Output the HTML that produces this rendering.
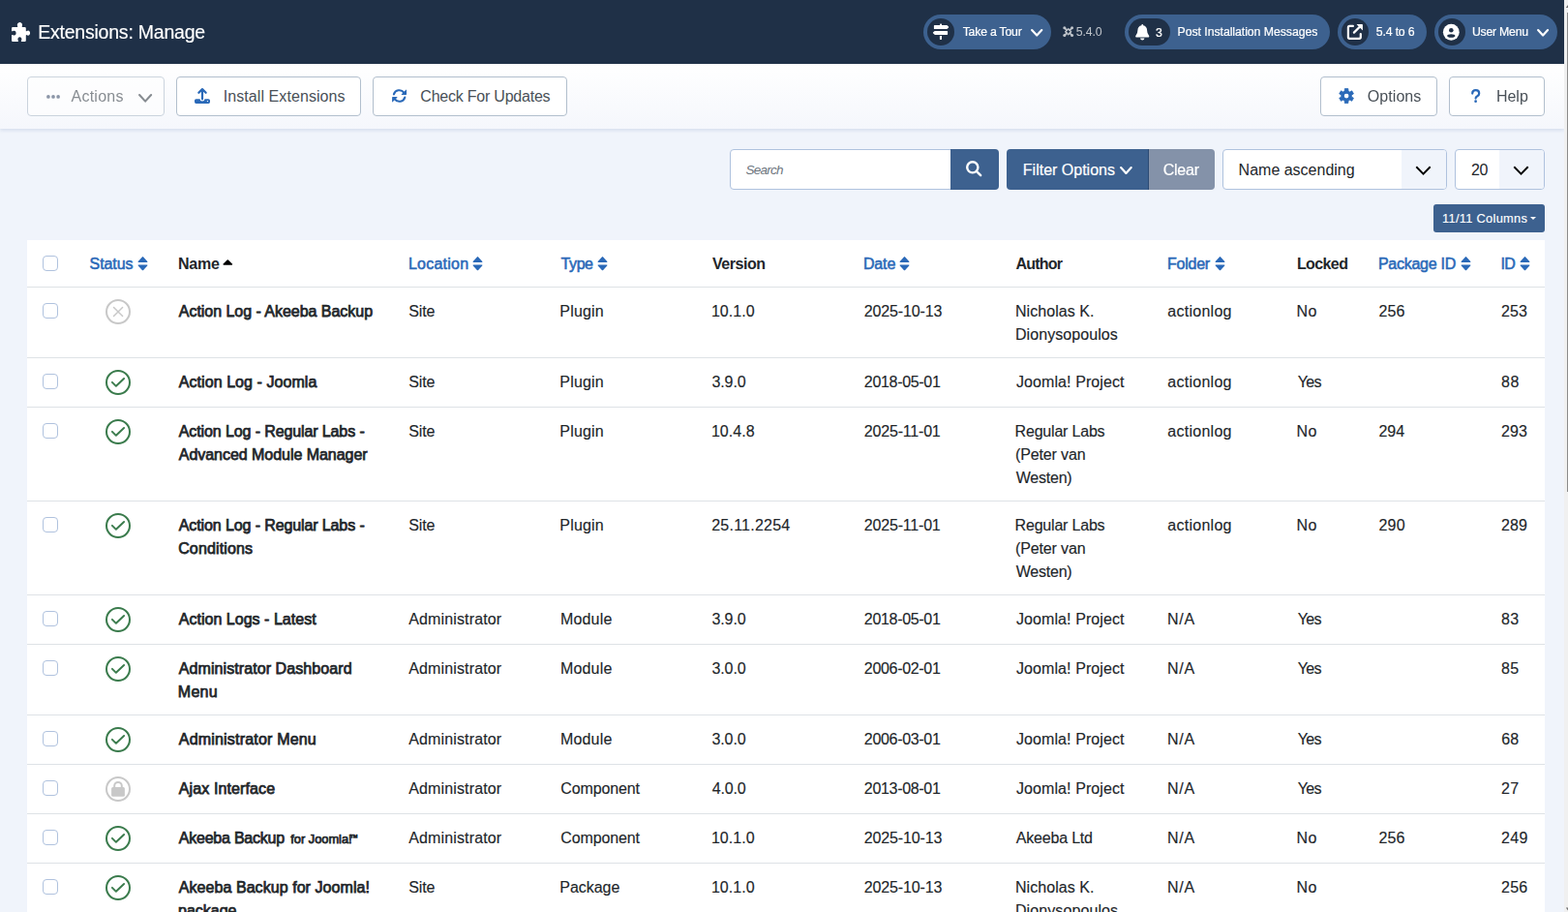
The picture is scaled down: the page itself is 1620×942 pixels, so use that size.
<!DOCTYPE html>
<html lang="en"><head><meta charset="utf-8"><title>Extensions: Manage</title>
<style>
*{box-sizing:border-box;margin:0;padding:0}
html,body{width:1620px;height:942px;overflow:hidden}
body{background:#f0f4fb;font-family:"Liberation Sans",sans-serif;font-size:16px;line-height:24px;color:#22262a;position:relative}
.ic{display:block;flex:none;overflow:visible}
span{white-space:nowrap}
#wrap{position:absolute;left:0;top:0;width:1616px;height:942px;overflow:hidden;background:#f0f4fb}
#sb{position:absolute;left:1616px;top:0;width:4px;height:942px;background:#f0f0f0}
#sb i{position:absolute;left:3px;top:13px;width:1px;height:495px;background:#8b8b8b}
#hd{position:absolute;left:0;top:0;width:1616px;height:66px;background:#1f3047;color:#fff;will-change:transform}
#ttl{font-weight:normal;position:absolute;left:40px;top:18.2px;font-size:19.5px;line-height:30px;color:#fff;-webkit-text-stroke:.15px currentColor}
.pill{position:absolute;top:15px;height:36px;border-radius:18px;background:#3d618f;color:#fff;font-size:12.3px;line-height:36px}
.pill .dot{position:absolute;left:4px;top:4px;height:28px;width:28px;border-radius:14px;background:#1f3047}
.pill .tx{position:absolute;top:-.5px;-webkit-text-stroke:.2px currentColor}
.ver{position:absolute;top:14.5px;height:36px;line-height:36px;font-size:12.3px;color:#fff;opacity:.71}
#tb{position:absolute;left:0;top:66px;width:1616px;height:67px;background:linear-gradient(#ffffff,#f5f7fc);box-shadow:0 2px 3px rgba(150,170,205,.26)}
.btn{position:absolute;top:13px;height:41px;border:1px solid #b2bfcd;border-radius:4px;background:#fff;color:#495057;font-size:16px;line-height:39px}
.btn .tx{position:absolute;top:0}
.btn.dis{opacity:.65;will-change:transform}
.ctl{position:absolute;top:154px;height:42px;font-size:16px;line-height:40px}
.ctl .tx{position:absolute;top:1px}
.inp{background:#fff;border:1px solid #afc2de;border-radius:4px}
.pri{background:#3d618f;color:#fff;line-height:42px;-webkit-text-stroke:.2px currentColor}
.sel{background:#fff;border:1px solid #afc2de;border-radius:4px;overflow:hidden}
.sel .arr{position:absolute;top:0;bottom:0;right:0;background:#f0f4fb}
#cols{position:absolute;left:1481px;top:211px;width:115px;height:29px;border-radius:3px;background:#3d618f;color:#fff;font-size:12.8px;line-height:29px}
#cols .tx{position:absolute;left:9.4px;top:-.5px;-webkit-text-stroke:.15px currentColor}
table{position:absolute;left:28px;top:248px;width:1568px;border-collapse:separate;border-spacing:0;table-layout:fixed;background:#fff}
td{-webkit-text-stroke:.15px currentColor}
th,td{padding:13px 12px 11px;vertical-align:top;text-align:left;font-weight:normal;border-bottom:1px solid #dee2e6;line-height:24px;white-space:nowrap;position:relative}
td.c{padding:12px}
thead th,thead td{color:#22262a;font-weight:bold}
thead a{font-weight:normal;-webkit-text-stroke:.55px currentColor}
thead a{color:#2a69b8;text-decoration:none}
tbody th{-webkit-text-stroke:.75px currentColor}
.cb{display:block;width:16px;height:16px;border:1px solid #b0c2de;border-radius:4px;background:#fff;margin:4px 0 0 4px}
.st{display:block;position:relative;width:26px;height:26px;border:2px solid #3a7b4c;border-radius:50%;margin:0 0 0 17px}
.st.off{border-color:#c8c8c8}
small{font-size:12.8px;line-height:1}
</style></head>
<body>
<div id="wrap">
<header id="hd">
<svg class="ic" viewBox="0 0 20 20" width="20" height="20" style="position:absolute;left:12px;top:23px" aria-hidden="true"><path d="M1.2 5 H5.7 Q6.4 5 6.2 4.2 Q5.4 3 6.1 1.6 Q6.9 0 8.4 0 Q10 0 10.8 1.6 Q11.4 3 10.7 4.2 Q10.5 5 11.2 5 H13.6 Q14.8 5 14.8 6.2 V8.9 Q14.9 9.6 15.7 9.1 Q17 8.1 18.2 8.9 Q19.1 9.7 19.1 11.1 Q19.1 12.5 18.2 13.3 Q17 14.1 15.7 13.2 Q14.9 12.7 14.8 13.4 V18.8 Q14.8 20 13.6 20 H10.4 Q9.6 20 9.9 19.2 Q10.9 17.6 10.1 16.2 Q9.4 15.2 8.4 15.2 Q7.4 15.2 6.7 16.2 Q5.9 17.6 6.9 19.2 Q7.2 20 6.4 20 H1.2 Q0 20 0 18.8 V13.6 Q0 12.8 .8 13.1 Q2.2 13.9 3.6 13.2 Q4.6 12.5 4.6 11.2 Q4.6 9.8 3.6 9.1 Q2.2 8.3 .8 9.2 Q0 9.5 0 8.7 V6.2 Q0 5 1.2 5Z" fill="#fff"/></svg>
<h1 id="ttl"><span style="letter-spacing:-0.22px;position:relative;left:-0.8px;">Extensions: Manage</span></h1>
<div class="pill" style="left:954px;width:132px"><span class="dot"><svg class="ic" viewBox="0 0 28 28" width="28" height="28" style="position:absolute;left:0px;top:0px" aria-hidden="true"><path d="M13.1 6.2 Q13.1 5.6 13.7 5.6 H14.4 Q15 5.6 15 6.2 V7 H20 Q20.4 7 20.7 7.3 L22 8.6 Q22.4 9.05 22 9.5 L20.7 10.8 Q20.4 11.1 20 11.1 H7.5 Q6.9 11.1 6.9 10.5 V7.6 Q6.9 7 7.5 7 H13.1Z M20.5 12.9 Q21.1 12.9 21.1 13.5 V16.3 Q21.1 16.9 20.5 16.9 H8 Q7.6 16.9 7.3 16.6 L6 15.35 Q5.6 14.9 6 14.45 L7.3 13.2 Q7.6 12.9 8 12.9Z M12.9 18 H15 V21.3 Q15 21.9 14.4 21.9 H13.5 Q12.9 21.9 12.9 21.3Z" fill="#fff"/></svg></span><span class="tx" style="left:41.2px"><span style="letter-spacing:-0.23px;position:relative;left:-0.5px;">Take a Tour</span></span><svg class="ic" viewBox="0 0 12.4 7.6" width="12.4" height="7.6" style="position:absolute;left:111px;top:15px" aria-hidden="true"><path d="M1.1 1.1 L6.2 6.5 L11.3 1.1" fill="none" stroke="#fff" stroke-width="2.2" stroke-linecap="round" stroke-linejoin="round"/></svg></div>
<svg class="ic" viewBox="0 0 12 12" width="11.4" height="11.4" style="position:absolute;left:1097.6px;top:26.8px;opacity:.71" aria-hidden="true"><g fill="none" stroke="#fff" stroke-linecap="round" stroke-linejoin="round"><path d="M6 2.9 L9.1 6 L6 9.1 L2.9 6Z" stroke-width="1.5"/><path d="M2.2 2.2 L4.4 4.4 M9.8 2.2 L7.6 4.4 M2.2 9.8 L4.4 7.6 M9.8 9.8 L7.6 7.6" stroke-width="1.9"/></g><g fill="#fff"><circle cx="1.9" cy="1.9" r="1.6"/><circle cx="10.1" cy="1.9" r="1.6"/><circle cx="1.9" cy="10.1" r="1.6"/><circle cx="10.1" cy="10.1" r="1.6"/></g></svg>
<div class="ver" style="left:1112px"><span style="letter-spacing:-0.10px;position:relative;left:-0.3px;">5.4.0</span></div>
<div class="pill" style="left:1162px;width:212px"><span class="dot" style="width:43px"><svg class="ic" viewBox="0 0 14.5 16.4" width="14.5" height="16.4" style="position:absolute;left:6.8px;top:5.6px" aria-hidden="true"><path d="M7.25 0 Q8.1 0 8.1 .85 V1.3 Q11.9 2.1 12.1 6.3 Q12.1 9.5 13.9 11.6 Q14.6 12.4 14.2 13.1 Q13.9 13.6 13.2 13.6 H1.3 Q.6 13.6 .3 13.1 Q-.1 12.4 .6 11.6 Q2.4 9.5 2.4 6.3 Q2.6 2.1 6.4 1.3 V.85 Q6.4 0 7.25 0Z M5 14.5 H9.5 Q9.2 16.4 7.25 16.4 Q5.3 16.4 5 14.5Z" fill="#fff"/></svg></span><span class="tx" style="left:32px;top:.5px"><span>3</span></span><span class="tx" style="left:55.4px"><span style="letter-spacing:-0.06px;position:relative;left:-0.8px;">Post Installation Messages</span></span></div>
<div class="pill" style="left:1382px;width:92px"><span class="dot"><svg class="ic" viewBox="0 0 28 28" width="28" height="28" style="position:absolute;left:0px;top:0px" aria-hidden="true"><path d="M11.9 7.9 H8.4 Q6.9 7.9 6.9 9.4 V19.3 Q6.9 20.8 8.4 20.8 H18.3 Q19.8 20.8 19.8 19.3 V16" fill="none" stroke="#fff" stroke-width="2.2" stroke-linecap="round" stroke-linejoin="round"/><path d="M12.9 14.6 L19.3 8.2" fill="none" stroke="#fff" stroke-width="2.2" stroke-linecap="round"/><path d="M16 6.1 H21.2 Q21.9 6.1 21.9 6.8 V12 Q21.9 12.6 21.4 12.1 L15.9 6.6 Q15.4 6.1 16 6.1Z" fill="#fff"/></svg></span><span class="tx" style="left:40.2px"><span style="letter-spacing:-0.17px;position:relative;left:-0.4px;">5.4 to 6</span></span></div>
<div class="pill" style="left:1482px;width:127px"><span class="dot"><svg class="ic" viewBox="0 0 28 28" width="28" height="28" style="position:absolute;left:0px;top:0px" aria-hidden="true"><circle cx="13.3" cy="14.25" r="8.4" fill="#fff"/><circle cx="13.3" cy="12.2" r="2.3" fill="#1f3047"/><ellipse cx="13.3" cy="17.95" rx="4.1" ry="1.75" fill="#1f3047"/></svg></span><span class="tx" style="left:39.5px"><span style="letter-spacing:-0.24px;position:relative;left:-0.6px;">User Menu</span></span><svg class="ic" viewBox="0 0 12.2 7.6" width="12.2" height="7.6" style="position:absolute;left:105.8px;top:15px" aria-hidden="true"><path d="M1.1 1.1 L6.1 6.5 L11.1 1.1" fill="none" stroke="#fff" stroke-width="2.2" stroke-linecap="round" stroke-linejoin="round"/></svg></div>
</header>
<div id="tb">
<div class="btn dis" style="left:28px;width:142px"><svg class="ic" viewBox="0 0 14 3.8" width="14" height="3.8" style="position:absolute;left:18.9px;top:17.6px" aria-hidden="true"><g fill="#505f79"><circle cx="1.9" cy="1.9" r="1.85"/><circle cx="7" cy="1.9" r="1.85"/><circle cx="12.1" cy="1.9" r="1.85"/></g></svg><span class="tx" style="left:44.5px"><span style="letter-spacing:0.22px;position:relative;left:0.1px;">Actions</span></span><svg class="ic" viewBox="0 0 14.2 8.7" width="14.2" height="8.7" style="position:absolute;left:114.3px;top:16.6px" aria-hidden="true"><path d="M1.05 1.05 L7.1 7.65 L13.15 1.05" fill="none" stroke="#495057" stroke-width="2.1" stroke-linecap="round" stroke-linejoin="round"/></svg></div>
<div class="btn" style="left:182px;width:191px"><svg class="ic" viewBox="0 0 16 16" width="16" height="16" style="position:absolute;left:18.1px;top:10.6px" aria-hidden="true"><path d="M8 1.1 V11.3 M4.3 4.8 L8 1.1 L11.7 4.8" fill="none" stroke="#2a69b8" stroke-width="2.2" stroke-linecap="round" stroke-linejoin="round"/><path d="M1.6 11.2 H5.6 V11.6 Q5.6 13.6 8 13.6 Q10.4 13.6 10.4 11.6 V11.2 H14.4 Q16 11.2 16 12.8 V14.3 Q16 15.9 14.4 15.9 H1.6 Q0 15.9 0 14.3 V12.8 Q0 11.2 1.6 11.2Z M13.45 12.9 A.65 .65 0 1 0 13.45 14.2 A.65 .65 0 1 0 13.45 12.9Z" fill="#2a69b8" fill-rule="evenodd"/></svg><span class="tx" style="left:48.9px"><span style="letter-spacing:0.08px;position:relative;left:-1.2px;">Install Extensions</span></span></div>
<div class="btn" style="left:385px;width:201px"><svg class="ic" viewBox="0 0 15.2 14" width="15.2" height="14" style="position:absolute;left:19px;top:11.5px" aria-hidden="true"><path d="M1.9 5.4 A5.9 5.9 0 0 1 12.3 3.6" fill="none" stroke="#2a69b8" stroke-width="2.1" stroke-linecap="round"/><path d="M15.1 .9 V5.3 Q15.1 5.9 14.5 5.9 H10.1 Q9.3 5.9 9.9 5.3 L14.5 .7 Q15.1 .1 15.1 .9Z" fill="#2a69b8"/><path d="M13.3 8.6 A5.9 5.9 0 0 1 2.9 10.4" fill="none" stroke="#2a69b8" stroke-width="2.1" stroke-linecap="round"/><path d="M.1 13.1 V8.7 Q.1 8.1 .7 8.1 H5.1 Q5.9 8.1 5.3 8.7 L.7 13.3 Q.1 13.9 .1 13.1Z" fill="#2a69b8"/></svg><span class="tx" style="left:48.6px"><span style="letter-spacing:-0.22px;position:relative;left:-0.3px;">Check For Updates</span></span></div>
<div class="btn" style="left:1364px;width:121px"><svg class="ic" viewBox="0 0 16.2 16.2" width="16.2" height="16.2" style="position:absolute;left:18px;top:10.85px" aria-hidden="true"><path d="M6.18 3.11 L6.37 0.60 L9.83 0.60 L10.02 3.11 L11.47 3.94 L13.73 2.85 L15.46 5.85 L13.38 7.26 L13.38 8.94 L15.46 10.35 L13.73 13.35 L11.47 12.26 L10.02 13.09 L9.83 15.60 L6.37 15.60 L6.18 13.09 L4.73 12.26 L2.47 13.35 L0.74 10.35 L2.82 8.94 L2.82 7.26 L0.74 5.85 L2.47 2.85 L4.73 3.94Z" fill="#2a69b8" stroke="#2a69b8" stroke-width=".8" stroke-linejoin="round"/><circle cx="8.1" cy="8.1" r="2.35" fill="#fff"/></svg><span class="tx" style="left:48.5px"><span style="letter-spacing:0.06px;position:relative;left:-0.7px;">Options</span></span></div>
<div class="btn" style="left:1497px;width:99px"><svg class="ic" viewBox="0 0 9.4 14.1" width="9.4" height="14.1" style="position:absolute;left:21.9px;top:11.5px" aria-hidden="true"><path d="M1.2 4.6 Q1.2 1.1 4.7 1.1 Q8.2 1.1 8.2 4.4 Q8.2 6.2 6.3 7.3 Q4.6 8.2 4.6 9.6" fill="none" stroke="#2a69b8" stroke-width="2.2" stroke-linecap="round" stroke-linejoin="round"/><circle cx="4.6" cy="12.7" r="1.35" fill="#2a69b8"/></svg><span class="tx" style="left:49px"><span style="position:relative;left:-1.1px;">Help</span></span></div>
</div>
<div class="ctl inp" style="left:754px;width:232px"><span class="tx" style="left:16px;font-size:13.5px;font-style:italic;color:#6d757e"><span style="letter-spacing:-0.76px;position:relative;left:-0.5px;">Search</span></span></div>
<div class="ctl pri" style="left:982px;width:50px;border-radius:0 4px 4px 0"><svg class="ic" viewBox="0 0 17 17" width="17" height="17" style="position:absolute;left:16.2px;top:12.1px" aria-hidden="true"><circle cx="6.8" cy="6.8" r="5.6" fill="none" stroke="#fff" stroke-width="2.4"/><path d="M11.1 11.1 L15.15 15.15" fill="none" stroke="#fff" stroke-width="2.4" stroke-linecap="round"/></svg></div>
<div class="ctl pri" style="left:1040px;width:147px;border-radius:4px 0 0 4px;border-right:1px solid #2c4a74"><span class="tx" style="left:17px"><span style="position:relative;left:-0.2px;">Filter Options</span></span><svg class="ic" viewBox="0 0 12.8 8" width="12.8" height="8" style="position:absolute;left:116.6px;top:17.8px" aria-hidden="true"><path d="M1.1 1.1 L6.4 6.9 L11.7 1.1" fill="none" stroke="#fff" stroke-width="2.2" stroke-linecap="round" stroke-linejoin="round"/></svg></div>
<div class="ctl" style="left:1187px;width:68px;border-radius:0 4px 4px 0;background:#8492a9;color:#fff;line-height:42px;-webkit-text-stroke:.2px currentColor;will-change:transform"><span class="tx" style="left:15px"><span style="letter-spacing:-0.24px;position:relative;left:-0.3px;">Clear</span></span></div>
<div class="ctl sel" style="left:1263px;width:232px"><span class="tx" style="left:16.2px"><span style="position:relative;left:-0.6px;">Name ascending</span></span><span class="arr" style="width:46px"></span><svg class="ic" viewBox="0 0 15 8.6" width="15" height="8.6" style="position:absolute;left:199.2px;top:17.3px" aria-hidden="true"><path d="M0.95 0.95 L7.5 7.65 L14.05 0.95" fill="none" stroke="#000" stroke-width="1.9" stroke-linecap="square" stroke-linejoin="miter"/></svg></div>
<div class="ctl sel" style="left:1503px;width:93px"><span class="tx" style="left:16.2px"><span style="letter-spacing:-0.41px;position:relative;left:-0.1px;">20</span></span><span class="arr" style="width:46px"></span><svg class="ic" viewBox="0 0 15 8.6" width="15" height="8.6" style="position:absolute;left:60.2px;top:17.3px" aria-hidden="true"><path d="M0.95 0.95 L7.5 7.65 L14.05 0.95" fill="none" stroke="#000" stroke-width="1.9" stroke-linecap="square" stroke-linejoin="miter"/></svg></div>
<div id="cols"><span class="tx"><span style="letter-spacing:0.31px;position:relative;left:-0.4px;">11/11 Columns</span></span><svg class="ic" viewBox="0 0 6 3" width="6" height="3" style="position:absolute;left:100px;top:12.7px" aria-hidden="true"><path d="M0 0H6L3 3Z" fill="#fff"/></svg></div>
<table><colgroup><col style="width:52px"><col style="width:92px"><col style="width:238px"><col style="width:157px"><col style="width:157px"><col style="width:157px"><col style="width:156px"><col style="width:157px"><col style="width:134px"><col style="width:84px"><col style="width:127px"><col style="width:57px"></colgroup>
<thead><tr>
<td class="c"><span class="cb"></span></td>
<th><a><span style="letter-spacing:-0.09px;position:relative;left:0.6px;">Status</span></a><svg class="ic" viewBox="0 0 11 14.4" width="11" height="14.4" style="position:absolute;left:61.8px;top:16.7px" aria-hidden="true"><path d="M.75 4.9 L4.85 .45 Q5.5 -.2 6.15 .45 L10.25 4.9 Q11 6 9.7 6 H1.3 Q0 6 .75 4.9Z M.75 9.5 L4.85 13.95 Q5.5 14.6 6.15 13.95 L10.25 9.5 Q11 8.4 9.7 8.4 H1.3 Q0 8.4 .75 9.5Z" fill="#2a69b8"/></svg></th>
<th><span style="letter-spacing:-0.22px;position:relative;left:-0.1px;">Name</span><svg class="ic" viewBox="0 0 10.6 5.8" width="10.6" height="5.8" style="position:absolute;left:58.3px;top:20.3px" aria-hidden="true"><path d="M.7 4.6 L4.7 .45 Q5.3 -.15 5.9 .45 L9.9 4.6 Q10.6 5.8 9.3 5.8 H1.3 Q0 5.8 .7 4.6Z" fill="#000"/></svg></th>
<th><a><span style="letter-spacing:0.25px;position:relative;left:-0.1px;">Location</span></a><svg class="ic" viewBox="0 0 11 14.4" width="11" height="14.4" style="position:absolute;left:78.1px;top:16.7px" aria-hidden="true"><path d="M.75 4.9 L4.85 .45 Q5.5 -.2 6.15 .45 L10.25 4.9 Q11 6 9.7 6 H1.3 Q0 6 .75 4.9Z M.75 9.5 L4.85 13.95 Q5.5 14.6 6.15 13.95 L10.25 9.5 Q11 8.4 9.7 8.4 H1.3 Q0 8.4 .75 9.5Z" fill="#2a69b8"/></svg></th>
<th><a><span style="letter-spacing:-0.42px;position:relative;left:0.6px;">Type</span></a><svg class="ic" viewBox="0 0 11 14.4" width="11" height="14.4" style="position:absolute;left:50px;top:16.7px" aria-hidden="true"><path d="M.75 4.9 L4.85 .45 Q5.5 -.2 6.15 .45 L10.25 4.9 Q11 6 9.7 6 H1.3 Q0 6 .75 4.9Z M.75 9.5 L4.85 13.95 Q5.5 14.6 6.15 13.95 L10.25 9.5 Q11 8.4 9.7 8.4 H1.3 Q0 8.4 .75 9.5Z" fill="#2a69b8"/></svg></th>
<th><span style="letter-spacing:-0.46px;">Version</span></th>
<th><a><span style="letter-spacing:-0.13px;position:relative;left:-1.1px;">Date</span></a><svg class="ic" viewBox="0 0 11 14.4" width="11" height="14.4" style="position:absolute;left:48.2px;top:16.7px" aria-hidden="true"><path d="M.75 4.9 L4.85 .45 Q5.5 -.2 6.15 .45 L10.25 4.9 Q11 6 9.7 6 H1.3 Q0 6 .75 4.9Z M.75 9.5 L4.85 13.95 Q5.5 14.6 6.15 13.95 L10.25 9.5 Q11 8.4 9.7 8.4 H1.3 Q0 8.4 .75 9.5Z" fill="#2a69b8"/></svg></th>
<th><span style="letter-spacing:-0.77px;position:relative;left:0.5px;">Author</span></th>
<th><a><span style="letter-spacing:-0.22px;position:relative;left:-0.1px;">Folder</span></a><svg class="ic" viewBox="0 0 11 14.4" width="11" height="14.4" style="position:absolute;left:60.7px;top:16.7px" aria-hidden="true"><path d="M.75 4.9 L4.85 .45 Q5.5 -.2 6.15 .45 L10.25 4.9 Q11 6 9.7 6 H1.3 Q0 6 .75 4.9Z M.75 9.5 L4.85 13.95 Q5.5 14.6 6.15 13.95 L10.25 9.5 Q11 8.4 9.7 8.4 H1.3 Q0 8.4 .75 9.5Z" fill="#2a69b8"/></svg></th>
<th><span style="letter-spacing:-0.60px;position:relative;left:-0.1px;">Locked</span></th>
<th><a><span style="letter-spacing:-0.26px;position:relative;left:-0.1px;">Package ID</span></a><svg class="ic" viewBox="0 0 11 14.4" width="11" height="14.4" style="position:absolute;left:96.7px;top:16.7px" aria-hidden="true"><path d="M.75 4.9 L4.85 .45 Q5.5 -.2 6.15 .45 L10.25 4.9 Q11 6 9.7 6 H1.3 Q0 6 .75 4.9Z M.75 9.5 L4.85 13.95 Q5.5 14.6 6.15 13.95 L10.25 9.5 Q11 8.4 9.7 8.4 H1.3 Q0 8.4 .75 9.5Z" fill="#2a69b8"/></svg></th>
<th><a><span style="letter-spacing:-0.82px;position:relative;left:-0.5px;">ID</span></a><svg class="ic" viewBox="0 0 11 14.4" width="11" height="14.4" style="position:absolute;left:30.8px;top:16.7px" aria-hidden="true"><path d="M.75 4.9 L4.85 .45 Q5.5 -.2 6.15 .45 L10.25 4.9 Q11 6 9.7 6 H1.3 Q0 6 .75 4.9Z M.75 9.5 L4.85 13.95 Q5.5 14.6 6.15 13.95 L10.25 9.5 Q11 8.4 9.7 8.4 H1.3 Q0 8.4 .75 9.5Z" fill="#2a69b8"/></svg></th>
</tr></thead><tbody>
<tr>
<td class="c"><span class="cb"></span></td>
<td class="c"><span class="st off"><svg class="ic" viewBox="0 0 26 26" width="26" height="26" style="position:absolute;left:-2px;top:-2px" aria-hidden="true"><path d="M8.5 8.5 L17.6 17.6 M17.6 8.5 L8.5 17.6" fill="none" stroke="#c8c8c8" stroke-width="1.45" stroke-linecap="round"/></svg></span></td>
<th scope="row"><span style="letter-spacing:-0.03px;position:relative;left:0.8px;">Action Log - Akeeba Backup</span></th>
<td><span style="letter-spacing:-0.08px;position:relative;left:0.2px;">Site</span></td>
<td><span style="letter-spacing:0.17px;position:relative;left:-0.7px;">Plugin</span></td>
<td><span style="letter-spacing:0.05px;position:relative;left:-1.1px;">10.1.0</span></td>
<td><span style="letter-spacing:-0.15px;position:relative;left:-0.2px;">2025-10-13</span></td>
<td><span style="letter-spacing:0.07px;position:relative;left:-0.1px;">Nicholas K.</span><br><span style="letter-spacing:0.08px;position:relative;left:-0.1px;">Dionysopoulos</span></td>
<td><span style="letter-spacing:0.27px;position:relative;left:0.3px;">actionlog</span></td>
<td><span style="letter-spacing:0.34px;position:relative;left:-0.4px;">No</span></td>
<td><span style="letter-spacing:0.16px;position:relative;left:0.5px;">256</span></td>
<td><span style="position:relative;left:0.1px;">253</span></td>
</tr>
<tr>
<td class="c"><span class="cb"></span></td>
<td class="c"><span class="st ok"><svg class="ic" viewBox="0 0 26 26" width="26" height="26" style="position:absolute;left:-2px;top:-2px" aria-hidden="true"><path d="M6.9 12.8 L10.9 16.8 L19.1 9" fill="none" stroke="#3a7b4c" stroke-width="1.9" stroke-linecap="round" stroke-linejoin="round"/></svg></span></td>
<th scope="row"><span style="letter-spacing:0.06px;position:relative;left:0.8px;">Action Log - Joomla</span></th>
<td><span style="letter-spacing:-0.08px;position:relative;left:0.2px;">Site</span></td>
<td><span style="letter-spacing:0.17px;position:relative;left:-0.7px;">Plugin</span></td>
<td><span style="letter-spacing:-0.09px;position:relative;left:-0.6px;">3.9.0</span></td>
<td><span style="letter-spacing:-0.32px;position:relative;left:-0.2px;">2018-05-01</span></td>
<td><span style="letter-spacing:0.10px;position:relative;left:0.9px;">Joomla! Project</span></td>
<td><span style="letter-spacing:0.27px;position:relative;left:0.3px;">actionlog</span></td>
<td><span style="letter-spacing:-0.69px;position:relative;left:0.7px;">Yes</span></td>
<td></td>
<td><span style="letter-spacing:0.57px;">88</span></td>
</tr>
<tr>
<td class="c"><span class="cb"></span></td>
<td class="c"><span class="st ok"><svg class="ic" viewBox="0 0 26 26" width="26" height="26" style="position:absolute;left:-2px;top:-2px" aria-hidden="true"><path d="M6.9 12.8 L10.9 16.8 L19.1 9" fill="none" stroke="#3a7b4c" stroke-width="1.9" stroke-linecap="round" stroke-linejoin="round"/></svg></span></td>
<th scope="row"><span style="letter-spacing:-0.11px;position:relative;left:0.8px;">Action Log - Regular Labs -</span><br><span style="letter-spacing:-0.04px;position:relative;left:0.8px;">Advanced Module Manager</span></th>
<td><span style="letter-spacing:-0.08px;position:relative;left:0.2px;">Site</span></td>
<td><span style="letter-spacing:0.17px;position:relative;left:-0.7px;">Plugin</span></td>
<td><span style="letter-spacing:0.06px;position:relative;left:-1.1px;">10.4.8</span></td>
<td><span style="letter-spacing:-0.19px;position:relative;left:-0.2px;">2025-11-01</span></td>
<td><span style="letter-spacing:-0.20px;position:relative;left:-0.4px;">Regular Labs</span><br><span style="letter-spacing:-0.13px;">(Peter van</span><br><span style="letter-spacing:-0.22px;position:relative;left:0.7px;">Westen)</span></td>
<td><span style="letter-spacing:0.27px;position:relative;left:0.3px;">actionlog</span></td>
<td><span style="letter-spacing:0.34px;position:relative;left:-0.4px;">No</span></td>
<td><span style="letter-spacing:-0.05px;position:relative;left:0.5px;">294</span></td>
<td><span style="position:relative;left:0.1px;">293</span></td>
</tr>
<tr>
<td class="c"><span class="cb"></span></td>
<td class="c"><span class="st ok"><svg class="ic" viewBox="0 0 26 26" width="26" height="26" style="position:absolute;left:-2px;top:-2px" aria-hidden="true"><path d="M6.9 12.8 L10.9 16.8 L19.1 9" fill="none" stroke="#3a7b4c" stroke-width="1.9" stroke-linecap="round" stroke-linejoin="round"/></svg></span></td>
<th scope="row"><span style="letter-spacing:-0.11px;position:relative;left:0.8px;">Action Log - Regular Labs -</span><br><span style="letter-spacing:0.13px;position:relative;left:0.2px;">Conditions</span></th>
<td><span style="letter-spacing:-0.08px;position:relative;left:0.2px;">Site</span></td>
<td><span style="letter-spacing:0.17px;position:relative;left:-0.7px;">Plugin</span></td>
<td><span style="letter-spacing:0.24px;position:relative;left:-0.8px;">25.11.2254</span></td>
<td><span style="letter-spacing:-0.19px;position:relative;left:-0.2px;">2025-11-01</span></td>
<td><span style="letter-spacing:-0.20px;position:relative;left:-0.4px;">Regular Labs</span><br><span style="letter-spacing:-0.13px;">(Peter van</span><br><span style="letter-spacing:-0.22px;position:relative;left:0.7px;">Westen)</span></td>
<td><span style="letter-spacing:0.27px;position:relative;left:0.3px;">actionlog</span></td>
<td><span style="letter-spacing:0.34px;position:relative;left:-0.4px;">No</span></td>
<td><span style="letter-spacing:0.17px;position:relative;left:0.5px;">290</span></td>
<td><span style="position:relative;left:0.1px;">289</span></td>
</tr>
<tr>
<td class="c"><span class="cb"></span></td>
<td class="c"><span class="st ok"><svg class="ic" viewBox="0 0 26 26" width="26" height="26" style="position:absolute;left:-2px;top:-2px" aria-hidden="true"><path d="M6.9 12.8 L10.9 16.8 L19.1 9" fill="none" stroke="#3a7b4c" stroke-width="1.9" stroke-linecap="round" stroke-linejoin="round"/></svg></span></td>
<th scope="row"><span style="letter-spacing:0.02px;position:relative;left:0.8px;">Action Logs - Latest</span></th>
<td><span style="letter-spacing:0.14px;position:relative;left:0.2px;">Administrator</span></td>
<td><span style="letter-spacing:0.19px;position:relative;left:-0.1px;">Module</span></td>
<td><span style="letter-spacing:-0.09px;position:relative;left:-0.6px;">3.9.0</span></td>
<td><span style="letter-spacing:-0.32px;position:relative;left:-0.2px;">2018-05-01</span></td>
<td><span style="letter-spacing:0.10px;position:relative;left:0.9px;">Joomla! Project</span></td>
<td><span style="letter-spacing:0.79px;position:relative;left:-0.1px;">N/A</span></td>
<td><span style="letter-spacing:-0.69px;position:relative;left:0.7px;">Yes</span></td>
<td></td>
<td><span style="letter-spacing:0.44px;">83</span></td>
</tr>
<tr>
<td class="c"><span class="cb"></span></td>
<td class="c"><span class="st ok"><svg class="ic" viewBox="0 0 26 26" width="26" height="26" style="position:absolute;left:-2px;top:-2px" aria-hidden="true"><path d="M6.9 12.8 L10.9 16.8 L19.1 9" fill="none" stroke="#3a7b4c" stroke-width="1.9" stroke-linecap="round" stroke-linejoin="round"/></svg></span></td>
<th scope="row"><span style="letter-spacing:0.08px;position:relative;left:0.8px;">Administrator Dashboard</span><br><span style="letter-spacing:0.26px;position:relative;left:-0.2px;">Menu</span></th>
<td><span style="letter-spacing:0.14px;position:relative;left:0.2px;">Administrator</span></td>
<td><span style="letter-spacing:0.19px;position:relative;left:-0.1px;">Module</span></td>
<td><span style="letter-spacing:-0.09px;position:relative;left:-0.6px;">3.0.0</span></td>
<td><span style="letter-spacing:-0.32px;position:relative;left:-0.2px;">2006-02-01</span></td>
<td><span style="letter-spacing:0.10px;position:relative;left:0.9px;">Joomla! Project</span></td>
<td><span style="letter-spacing:0.79px;position:relative;left:-0.1px;">N/A</span></td>
<td><span style="letter-spacing:-0.69px;position:relative;left:0.7px;">Yes</span></td>
<td></td>
<td><span style="letter-spacing:0.41px;">85</span></td>
</tr>
<tr>
<td class="c"><span class="cb"></span></td>
<td class="c"><span class="st ok"><svg class="ic" viewBox="0 0 26 26" width="26" height="26" style="position:absolute;left:-2px;top:-2px" aria-hidden="true"><path d="M6.9 12.8 L10.9 16.8 L19.1 9" fill="none" stroke="#3a7b4c" stroke-width="1.9" stroke-linecap="round" stroke-linejoin="round"/></svg></span></td>
<th scope="row"><span style="letter-spacing:0.19px;position:relative;left:0.8px;">Administrator Menu</span></th>
<td><span style="letter-spacing:0.14px;position:relative;left:0.2px;">Administrator</span></td>
<td><span style="letter-spacing:0.19px;position:relative;left:-0.1px;">Module</span></td>
<td><span style="letter-spacing:-0.09px;position:relative;left:-0.6px;">3.0.0</span></td>
<td><span style="letter-spacing:-0.32px;position:relative;left:-0.2px;">2006-03-01</span></td>
<td><span style="letter-spacing:0.10px;position:relative;left:0.9px;">Joomla! Project</span></td>
<td><span style="letter-spacing:0.79px;position:relative;left:-0.1px;">N/A</span></td>
<td><span style="letter-spacing:-0.69px;position:relative;left:0.7px;">Yes</span></td>
<td></td>
<td><span style="letter-spacing:0.13px;position:relative;left:0.3px;">68</span></td>
</tr>
<tr>
<td class="c"><span class="cb"></span></td>
<td class="c"><span class="st off"><svg class="ic" viewBox="0 0 26 26" width="26" height="26" style="position:absolute;left:-2px;top:-2px" aria-hidden="true"><path d="M9.2 12 V9.7 a3.8 3.8 0 0 1 7.6 0 V12" fill="none" stroke="#c8c8c8" stroke-width="2"/><rect x="6.1" y="11.1" width="13.8" height="9.7" rx="1.5" fill="#c8c8c8"/></svg></span></td>
<th scope="row"><span style="letter-spacing:0.11px;position:relative;left:0.8px;">Ajax Interface</span></th>
<td><span style="letter-spacing:0.14px;position:relative;left:0.2px;">Administrator</span></td>
<td><span style="letter-spacing:-0.14px;position:relative;left:0.3px;">Component</span></td>
<td><span style="letter-spacing:-0.18px;position:relative;left:-0.3px;">4.0.0</span></td>
<td><span style="letter-spacing:-0.32px;position:relative;left:-0.2px;">2013-08-01</span></td>
<td><span style="letter-spacing:0.10px;position:relative;left:0.9px;">Joomla! Project</span></td>
<td><span style="letter-spacing:0.79px;position:relative;left:-0.1px;">N/A</span></td>
<td><span style="letter-spacing:-0.69px;position:relative;left:0.7px;">Yes</span></td>
<td></td>
<td><span style="letter-spacing:0.15px;position:relative;left:0.1px;">27</span></td>
</tr>
<tr>
<td class="c"><span class="cb"></span></td>
<td class="c"><span class="st ok"><svg class="ic" viewBox="0 0 26 26" width="26" height="26" style="position:absolute;left:-2px;top:-2px" aria-hidden="true"><path d="M6.9 12.8 L10.9 16.8 L19.1 9" fill="none" stroke="#3a7b4c" stroke-width="1.9" stroke-linecap="round" stroke-linejoin="round"/></svg></span></td>
<th scope="row"><span style="letter-spacing:-0.23px;position:relative;left:0.8px;">Akeeba Backup</span> <small><span style="letter-spacing:0.01px;position:relative;left:2.7px;">for Joomla!</span><span style="font-size:8.5px;position:relative;top:-3.5px;line-height:1;margin-left:.3px">™</span></small></th>
<td><span style="letter-spacing:0.14px;position:relative;left:0.2px;">Administrator</span></td>
<td><span style="letter-spacing:-0.14px;position:relative;left:0.3px;">Component</span></td>
<td><span style="letter-spacing:0.05px;position:relative;left:-1.1px;">10.1.0</span></td>
<td><span style="letter-spacing:-0.15px;position:relative;left:-0.2px;">2025-10-13</span></td>
<td><span style="letter-spacing:-0.18px;position:relative;left:0.7px;">Akeeba Ltd</span></td>
<td><span style="letter-spacing:0.79px;position:relative;left:-0.1px;">N/A</span></td>
<td><span style="letter-spacing:0.34px;position:relative;left:-0.4px;">No</span></td>
<td><span style="letter-spacing:0.16px;position:relative;left:0.5px;">256</span></td>
<td><span style="letter-spacing:0.25px;position:relative;left:0.1px;">249</span></td>
</tr>
<tr>
<td class="c"><span class="cb"></span></td>
<td class="c"><span class="st ok"><svg class="ic" viewBox="0 0 26 26" width="26" height="26" style="position:absolute;left:-2px;top:-2px" aria-hidden="true"><path d="M6.9 12.8 L10.9 16.8 L19.1 9" fill="none" stroke="#3a7b4c" stroke-width="1.9" stroke-linecap="round" stroke-linejoin="round"/></svg></span></td>
<th scope="row"><span style="letter-spacing:0.06px;position:relative;left:0.8px;">Akeeba Backup for Joomla!</span><br><span style="letter-spacing:-0.02px;position:relative;left:0.1px;">package</span></th>
<td><span style="letter-spacing:-0.08px;position:relative;left:0.2px;">Site</span></td>
<td><span style="letter-spacing:-0.05px;position:relative;left:-0.7px;">Package</span></td>
<td><span style="letter-spacing:0.05px;position:relative;left:-1.1px;">10.1.0</span></td>
<td><span style="letter-spacing:-0.15px;position:relative;left:-0.2px;">2025-10-13</span></td>
<td><span style="letter-spacing:0.07px;position:relative;left:-0.1px;">Nicholas K.</span><br><span style="letter-spacing:0.10px;position:relative;left:-0.1px;">Dionysopoulos</span></td>
<td><span style="letter-spacing:0.79px;position:relative;left:-0.1px;">N/A</span></td>
<td><span style="letter-spacing:0.34px;position:relative;left:-0.4px;">No</span></td>
<td></td>
<td><span style="letter-spacing:0.23px;position:relative;left:0.1px;">256</span></td>
</tr>
</tbody></table>
</div><div id="sb"><i></i><svg class="ic" viewBox="0 0 4 942" width="4" height="942" style="position:absolute;left:0px;top:0px" aria-hidden="true"><path d="M1.8 8 L4 5 V8Z M1.8 937.5 H4 V940.5Z" fill="#6f6f6f"/></svg></div>
</body></html>
